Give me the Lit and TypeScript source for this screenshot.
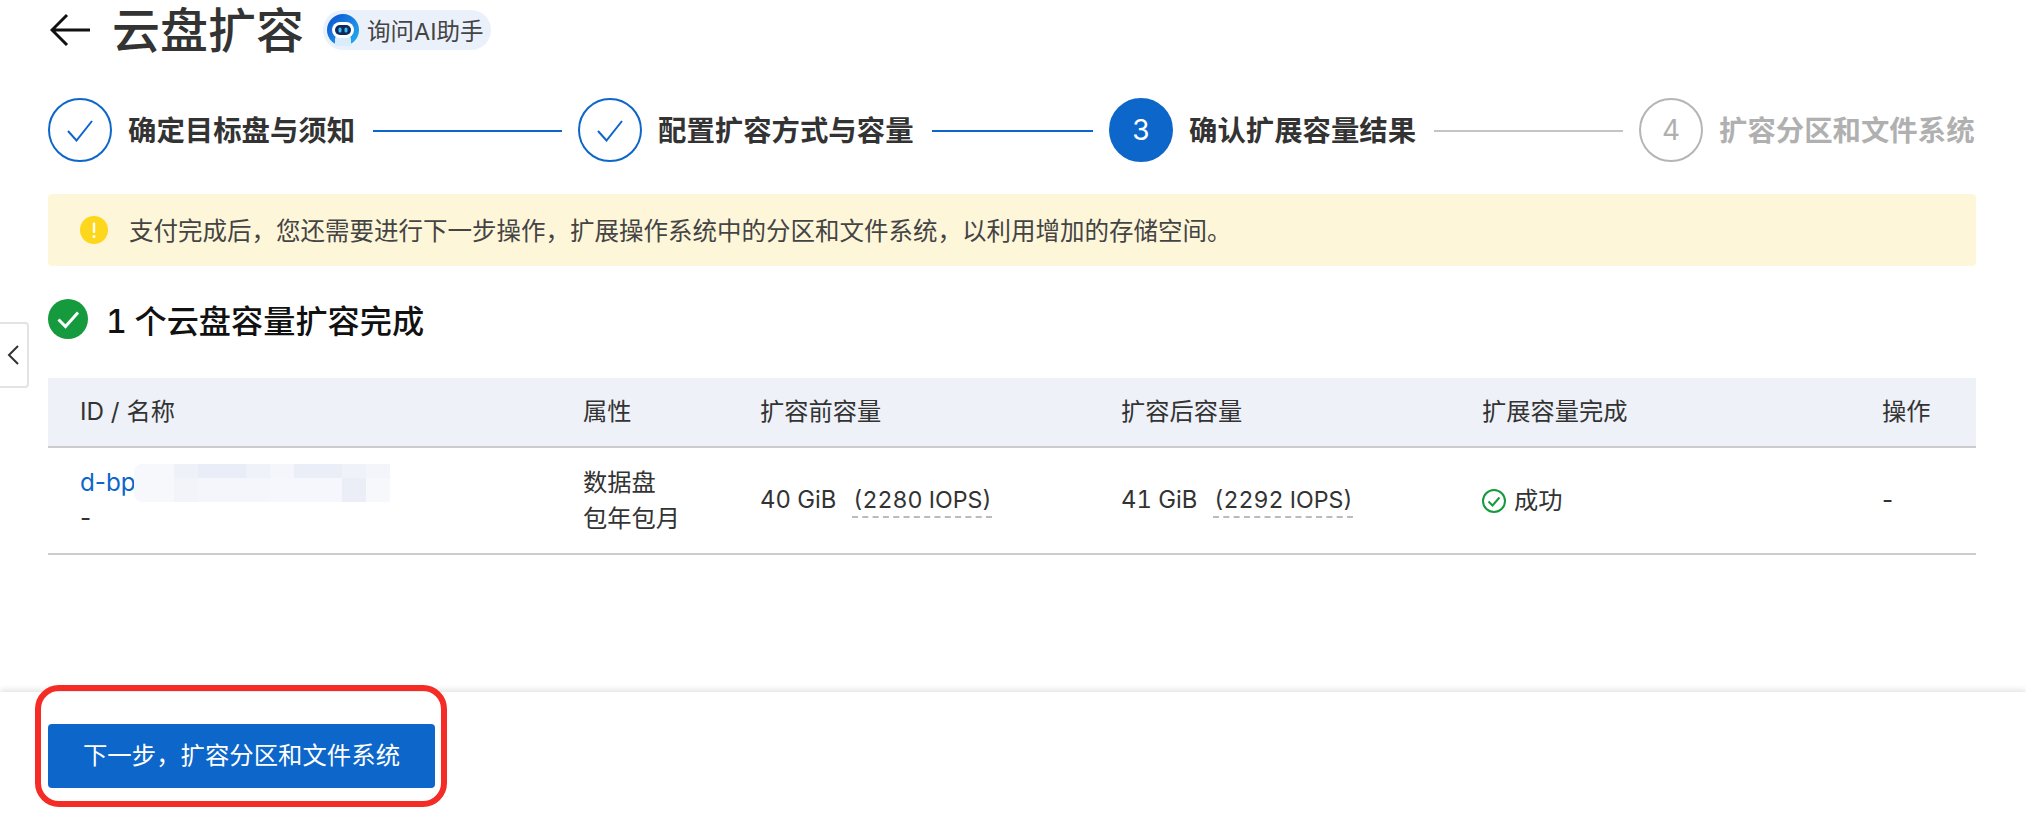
import { LitElement, html, css } from "lit";
import { customElement } from "lit/decorators.js";

const ROW1 = ["#f7f8fc","#eef1f8","#e9edf7","#e9edf7","#eff2f9","#f4f6fb","#eaeef7","#eaeef7","#eff2f9","#f3f5fb"];
const ROW2 = ["#f7f8fc","#f2f4fa","#f5f6fb","#f5f6fb","#f5f6fb","#f6f7fc","#f6f7fc","#f6f7fc","#ebeef7","#f7f8fc"];

const check = html`<svg class="check" viewBox="0 0 26 22" fill="none"><path d="M1 11 L9.5 20.5 L25 1" stroke="currentColor" stroke-width="2"/></svg>`;

@customElement("app-root")
export class AppRoot extends LitElement {
  static styles = css`
    :host { display: block; width: 2026px; height: 814px; position: relative; overflow: hidden; background: #fff;
      font-family: Inter, "Noto Sans CJK SC", sans-serif; color: #333; font-size: 24.25px; }
    .page { height: 814px; display: flex; flex-direction: column; }
    .main { flex: 1; padding: 0 50px 0 48px; min-height: 0; }
    .head { display: flex; align-items: center; height: 60px; }
    .back { width: 40px; height: 40px; margin: 0 22px 0 2px; color: #111; }
    h1 { margin: 0; font-size: 48px; line-height: 60px; font-weight: 500; color: #333; padding-top: 2px; }
    .ai { display: flex; align-items: center; height: 40px; margin-left: 19px; width: 168px; box-sizing: border-box; padding-left: 4px;
      border-radius: 20px; background: #ebf1fb; font-size: 23.5px; color: #444; gap: 8px; white-space: nowrap; }
    .ai svg { width: 32px; height: 32px; flex: none; }
    .steps { display: grid; grid-template-columns: 530px 531px 530px 1fr; align-items: center; height: 64px; margin-top: 38px; }
    .step { display: flex; align-items: center; }
    .circle { width: 64px; height: 64px; border-radius: 50%; box-sizing: border-box; border: 2px solid #0d66c9; flex: none;
      display: flex; align-items: center; justify-content: center; color: #0d66c9; font-size: 28px; }
    .check { width: 26px; height: 22px; margin-top: 2px; }
    .circle.cur { background: #0d66c9; color: #fff; }
    .circle.todo { border-color: #b5b5b5; color: #b0b0b0; }
    .lbl { margin: 2px 0 0 16px; font-size: 28.4px; font-weight: 700; color: #333; white-space: nowrap; line-height: 40px; }
    .lbl.todo { color: #b0b0b0; }
    .line { flex: 1; height: 2px; background: #0d66c9; margin: 2px 16px 0 18px; }
    .line.todo { background: #c4c4c4; }
    .alert { display: flex; align-items: center; height: 72px; margin-top: 32px; border-radius: 4px; background: #fef6d9; padding-left: 32px;
      font-size: 24.5px; color: #444; gap: 21px; white-space: nowrap; }
    .alert span { margin-top: -2px; }
    .alert svg { width: 28px; height: 28px; flex: none; }
    .done { display: flex; align-items: center; height: 40px; margin-top: 33px; gap: 18px; font-size: 32.2px; font-weight: 500; color: #111; white-space: nowrap;
      font-variant-numeric: tabular-nums; word-spacing: -1px; }
    .done svg { width: 40px; height: 40px; flex: none; }
    .table { margin-top: 39px; }
    .tr { display: grid; grid-template-columns: 503px 177px 361px 361px 400px 1fr; }
    .th { height: 68px; background: #eef1f8; border-bottom: 2px solid #ccc; align-items: center; }
    .td { height: 105px; border-bottom: 2px solid #ccc; align-items: center; }
    .c { padding-left: 32px; white-space: nowrap; line-height: 36px; }
    .name { display: flex; align-items: center; height: 36px; }
    .link { color: #0d66c9; }
    .mosaic { display: grid; grid-template-columns: 40px repeat(9, 24px); grid-template-rows: 14px 24px; height: 38px; margin-left: -2px; border-radius: 8px 0 0 8px; overflow: hidden; }
    .val { display: flex; gap: 16px; align-items: baseline; font-size: 23.8px; font-variant-numeric: tabular-nums; margin-top: -2px; }
    .dash { border-bottom: 2px dashed #bbb; line-height: 32px; padding: 0 1px; font-size: 23.2px; }
    .ok { display: flex; align-items: center; gap: 8px; }
    .ok svg { width: 24px; height: 24px; }
    .footer { height: 122px; flex: none; background: #fff; box-shadow: 0 -2px 6px rgba(0,0,0,.12); padding: 32px 0 0 48px; box-sizing: border-box; }
    .btn { width: 387px; height: 64px; display: flex; align-items: center; justify-content: center; border: 0; border-radius: 4px;
      background: #0d66c9; color: #fff; font: 400 24.4px Inter, "Noto Sans CJK SC", sans-serif; white-space: nowrap; padding: 0 0 5px; }
    .toggle { position: absolute; left: -2px; top: 322px; width: 31px; height: 66px; box-sizing: border-box; border: 2px solid #e3e3e3;
      border-radius: 0 4px 4px 0; background: #fff; display: flex; align-items: center; justify-content: center; color: #333; }
    .toggle svg { width: 14px; height: 22px; margin-right: 1px; }
    .mark { position: absolute; left: 35px; top: 685px; width: 412px; height: 122px; box-sizing: border-box; border: 6px solid #f42c25; border-radius: 24px; pointer-events: none; }
  `;

  render() {
    const capacity = (a: string, b: string) => html`<div class="c val"><span>${a}</span><span class="dash">${b}</span></div>`;
    return html`
      <div class="page">
        <div class="main">
          <div class="head">
            <svg class="back" viewBox="0 0 40 40" fill="none" stroke="currentColor" stroke-width="3"><path d="M40 20H2M17 5 2 20l15 15"/></svg>
            <h1>云盘扩容</h1>
            <div class="ai">
              <svg viewBox="0 0 32 32">
                <defs><linearGradient id="g" x1="0" y1="0" x2="1" y2="1"><stop offset="0" stop-color="#0b4fd0"/><stop offset="1" stop-color="#25b5f2"/></linearGradient></defs>
                <circle cx="16" cy="16" r="16" fill="url(#g)"/>
                <path d="M8 25a8 6 0 0 1 16 0v7H8z" fill="#d9ecfb"/>
                <rect x="5" y="8" width="22" height="16" rx="8" fill="#fff"/>
                <rect x="8" y="11" width="16" height="10" rx="5" fill="#10295c"/>
                <rect x="11.5" y="13.5" width="3" height="5" rx="1.5" fill="#35c2f5"/>
                <rect x="17.5" y="13.5" width="3" height="5" rx="1.5" fill="#35c2f5"/>
              </svg>
              <span>询问AI助手</span>
            </div>
          </div>
          <div class="steps">
            <div class="step"><div class="circle">${check}</div><div class="lbl">确定目标盘与须知</div><div class="line"></div></div>
            <div class="step"><div class="circle">${check}</div><div class="lbl">配置扩容方式与容量</div><div class="line"></div></div>
            <div class="step"><div class="circle cur">3</div><div class="lbl">确认扩展容量结果</div><div class="line todo"></div></div>
            <div class="step"><div class="circle todo">4</div><div class="lbl todo">扩容分区和文件系统</div></div>
          </div>
          <div class="alert">
            <svg viewBox="0 0 28 28"><circle cx="14" cy="14" r="14" fill="#fdd71c"/><rect x="12.8" y="6.5" width="2.4" height="10.5" rx="1" fill="#fff"/><circle cx="14" cy="20.5" r="1.5" fill="#fff"/></svg>
            <span>支付完成后，您还需要进行下一步操作，扩展操作系统中的分区和文件系统，以利用增加的存储空间。</span>
          </div>
          <div class="done">
            <svg viewBox="0 0 40 40" fill="none"><circle cx="20" cy="20" r="20" fill="#169a3e"/><path d="M10.5 20.5 17.5 27.5 30 13.5" stroke="#fff" stroke-width="3"/></svg>
            <span>1 个云盘容量扩容完成</span>
          </div>
          <div class="table">
            <div class="tr th">
              <div class="c">ID / 名称</div><div class="c">属性</div><div class="c">扩容前容量</div><div class="c">扩容后容量</div><div class="c">扩展容量完成</div><div class="c">操作</div>
            </div>
            <div class="tr td">
              <div class="c">
                <div class="name"><span class="link">d-bp</span><div class="mosaic">${[...ROW1, ...ROW2].map((b) => html`<i style="background:${b}"></i>`)}</div></div>
                <div>-</div>
              </div>
              <div class="c"><div>数据盘</div><div>包年包月</div></div>
              ${capacity("40 GiB", "(2280 IOPS)")}
              ${capacity("41 GiB", "(2292 IOPS)")}
              <div class="c ok"><svg viewBox="0 0 24 24" fill="none" stroke="#169a3e" stroke-width="2"><circle cx="12" cy="12" r="11"/><path d="M6.5 12.5 10.5 16.5 17.5 8.5"/></svg><span>成功</span></div>
              <div class="c">-</div>
            </div>
          </div>
        </div>
        <div class="footer"><button class="btn">下一步，扩容分区和文件系统</button></div>
      </div>
      <div class="toggle"><svg viewBox="0 0 14 22" fill="none" stroke="currentColor" stroke-width="2"><path d="M12 2 3 11l9 9"/></svg></div>
      <div class="mark"></div>
    `;
  }
}
